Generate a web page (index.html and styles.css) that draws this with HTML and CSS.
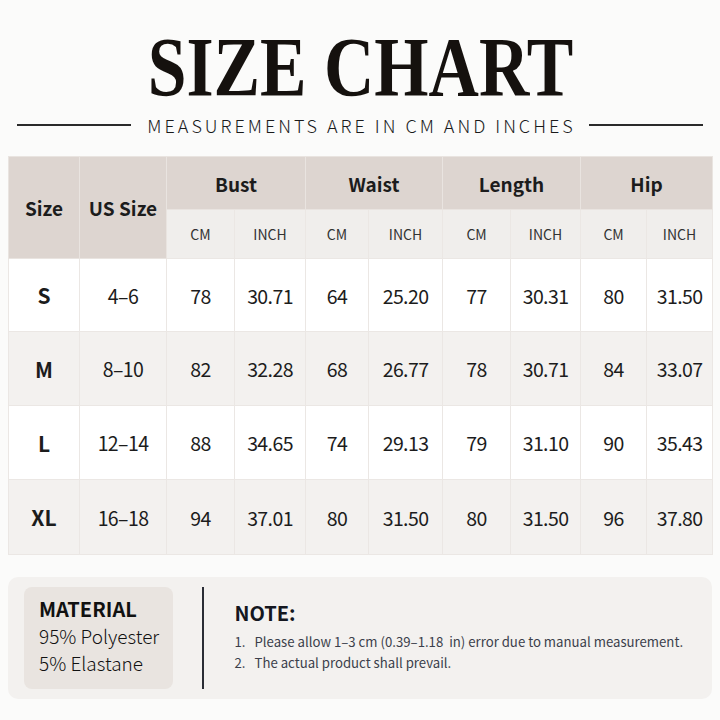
FILE: index.html
```html
<!DOCTYPE html>
<html>
<head>
<meta charset="utf-8">
<link rel="stylesheet" href="styles.css">
</head>
<body>
<div class="page">
  <header class="head">
    <h1 class="title"><span>SIZE CHART</span></h1>
    <div class="sub">
      <span class="rule"></span>
      <span class="subtext">MEASUREMENTS ARE IN CM AND INCHES</span>
      <span class="rule"></span>
    </div>
  </header>

  <table class="chart">
    <colgroup>
      <col style="width:71px"><col style="width:87px">
      <col style="width:68px"><col style="width:71px">
      <col style="width:63px"><col style="width:74px">
      <col style="width:68px"><col style="width:70px">
      <col style="width:66px"><col style="width:66px">
    </colgroup>
    <thead>
      <tr class="h1">
        <th rowspan="2" class="sz">Size</th>
        <th rowspan="2" class="sz">US Size</th>
        <th colspan="2">Bust</th>
        <th colspan="2">Waist</th>
        <th colspan="2">Length</th>
        <th colspan="2">Hip</th>
      </tr>
      <tr class="h2">
        <th>CM</th><th>INCH</th><th>CM</th><th>INCH</th><th>CM</th><th>INCH</th><th>CM</th><th>INCH</th>
      </tr>
    </thead>
    <tbody>
      <tr class="r1"><td class="s">S</td><td>4–6</td><td>78</td><td>30.71</td><td>64</td><td>25.20</td><td>77</td><td>30.31</td><td>80</td><td>31.50</td></tr>
      <tr class="r2"><td class="s">M</td><td>8–10</td><td>82</td><td>32.28</td><td>68</td><td>26.77</td><td>78</td><td>30.71</td><td>84</td><td>33.07</td></tr>
      <tr class="r3"><td class="s">L</td><td>12–14</td><td>88</td><td>34.65</td><td>74</td><td>29.13</td><td>79</td><td>31.10</td><td>90</td><td>35.43</td></tr>
      <tr class="r4"><td class="s">XL</td><td>16–18</td><td>94</td><td>37.01</td><td>80</td><td>31.50</td><td>80</td><td>31.50</td><td>96</td><td>37.80</td></tr>
    </tbody>
  </table>

  <section class="info">
    <div class="material">
      <div class="mat-title">MATERIAL</div>
      <div class="mat-line">95% Polyester</div>
      <div class="mat-line">5% Elastane</div>
    </div>
    <div class="divider"></div>
    <div class="note">
      <div class="note-title">NOTE:</div>
      <ol class="note-list">
        <li><span class="num">1.</span>Please allow 1–3 cm (0.39–1.18&nbsp; in) error due to manual measurement.</li>
        <li><span class="num">2.</span>The actual product shall prevail.</li>
      </ol>
    </div>
  </section>
</div>
</body>
</html>
```

FILE: styles.css
```css
* { box-sizing: border-box; }
html, body { margin: 0; padding: 0; }
body {
  background: #fbfbfa;
  font-family: "Noto Sans CJK SC", "Noto Sans", sans-serif;
  color: #1a1a1a;
}
.page {
  width: 720px;
  height: 720px;
  padding: 0 8px;
  overflow: hidden;
}
.head {
  padding-top: 30px;
}
.title {
  margin: 0;
  height: 74px;
  text-align: center;
  font-family: "Liberation Serif", serif;
  font-weight: 700;
  font-size: 85px;
  line-height: 74px;
  color: #15110e;
}
.title span {
  display: inline-block;
  transform: scaleX(0.82);
}
.sub {
  display: flex;
  align-items: center;
  justify-content: center;
  gap: 16px;
  height: 30px;
  margin-top: 6px;
}
.rule {
  width: 114px;
  height: 1.5px;
  background: #2a2a2a;
}
.subtext {
  font-family: "Noto Sans CJK SC", sans-serif;
  font-weight: 300;
  font-size: 18px;
  letter-spacing: 3px;
  color: #1a1a1a;
  margin-right: -3px;
}
.chart {
  margin-top: 16px;
  width: 704px;
  border-collapse: collapse;
  table-layout: fixed;
  font-family: "Noto Sans CJK SC", sans-serif;
  text-align: center;
  color: #1c1c1c;
}
.chart th, .chart td {
  border: 1px solid #ebe7e4;
  padding: 0;
}
.chart .h1 { height: 53px; }
.chart .h1 th {
  background: #ddd5d0;
  font-size: 19px;
  font-weight: 700;
  border-color: #e9e4e0;
}
.chart .h1 th.sz { padding-top: 0; }
.chart .h2 { height: 49px; }
.chart .h2 th {
  background: #f0eeec;
  font-size: 14px;
  font-weight: 400;
  color: #333;
}
.chart td {
  font-size: 19.5px;
  font-weight: 400;
  letter-spacing: -0.6px;
}
.chart td.s {
  font-weight: 700;
  font-size: 21px;
  letter-spacing: 0;
}
.r1 { height: 73px; background: #ffffff; }
.r2 { height: 74px; background: #f3f1ef; }
.r3 { height: 74px; background: #ffffff; }
.r4 { height: 75px; background: #f3f1ef; }

.info {
  margin-top: 22px;
  background: #f3f1ef;
  border-radius: 10px;
  height: 122px;
  display: flex;
  align-items: stretch;
  padding: 10px 16px;
}
.material {
  flex: none;
  width: 149px;
  background: #e9e4e0;
  border-radius: 8px;
  padding: 9px 0 0 15px;
  white-space: nowrap;
}
.mat-title {
  font-weight: 700;
  font-size: 20px;
  line-height: 26px;
  color: #111;
}
.mat-line {
  font-size: 19px;
  font-weight: 300;
  line-height: 27px;
  color: #111;
}
.divider {
  flex: none;
  width: 1.5px;
  background: #2a2d35;
  margin-left: 29px;
}
.note {
  padding-left: 31px;
  padding-top: 13px;
}
.note-title {
  font-weight: 700;
  font-size: 20px;
  line-height: 26px;
  color: #14171f;
  margin-bottom: 5px;
}
.note-list {
  list-style: none;
  margin: 0;
  padding: 0;
  font-size: 13.2px;
  line-height: 21px;
  color: #3b3f4b;
}
.num {
  display: inline-block;
  width: 20px;
}
```
